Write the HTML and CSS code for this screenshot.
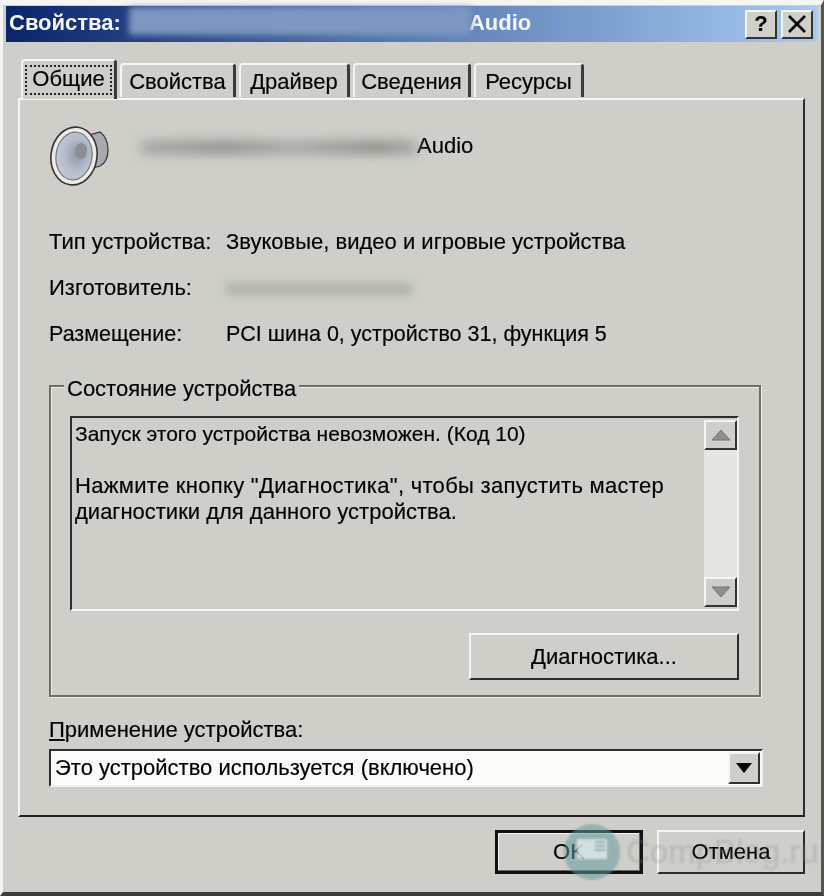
FILE: index.html
```html
<!DOCTYPE html>
<html lang="ru">
<head>
  <meta charset="UTF-8" />
  <meta name="viewport" content="width=device-width, initial-scale=1" />
  <title>Свойства</title>
  <link rel="stylesheet" href="styles.css">
</head>
<body>
  <div class="window">
    <div class="titlebar">
      <span class="title-text">Свойства:</span>
      <span class="title-smudge"></span>
      <span class="title-text title-audio">Audio</span>
      <div class="title-buttons">
        <button class="title-btn">?</button>
        <button class="title-btn">
          <svg width="22" height="20" viewBox="0 0 22 20"><path d="M3 2 L19 18 M19 2 L3 18" stroke="#000" stroke-width="2.6" fill="none"/></svg>
        </button>
      </div>
    </div>

    <div class="tabs">
      <div class="tab tab-active"><span class="tab-focus">Общие</span></div>
      <div class="tab tab-2">Свойства</div>
      <div class="tab tab-3">Драйвер</div>
      <div class="tab tab-4">Сведения</div>
      <div class="tab tab-5">Ресурсы</div>
    </div>

    <div class="panel">
      <div class="device-head">
        <svg class="speaker" width="62" height="64" viewBox="0 0 62 64">
          <defs>
            <radialGradient id="cone" cx="0.6" cy="0.45" r="0.7">
              <stop offset="0" stop-color="#8f97a8"/>
              <stop offset="0.5" stop-color="#b4bccb"/>
              <stop offset="1" stop-color="#c9ced8"/>
            </radialGradient>
          </defs>
          <path d="M36 12 L50 8 Q58 14 58 26 Q58 38 50 42 L36 46 Z" fill="#a8abae" stroke="#333" stroke-width="1.2"/>
          <ellipse cx="24" cy="32" rx="23" ry="29" fill="#ecebe7" stroke="#333" stroke-width="1.6" transform="rotate(8 24 32)"/>
          <ellipse cx="24" cy="32" rx="18" ry="24" fill="url(#cone)" stroke="#777" stroke-width="1.2" transform="rotate(8 24 32)"/>
          <ellipse cx="31" cy="27" rx="6" ry="8" fill="#8d8f95"/>
        </svg>
        <span class="device-blur"></span>
        <span class="device-audio">Audio</span>
      </div>

      <div class="info">
        <div class="info-row"><span class="info-key">Тип устройства:</span><span>Звуковые, видео и игровые устройства</span></div>
        <div class="info-row"><span class="info-key">Изготовитель:</span><span class="maker-blur"></span></div>
        <div class="info-row info-row-pci"><span class="info-key">Размещение:</span><span>PCI шина 0, устройство 31, функция 5</span></div>
      </div>

      <fieldset class="group">
        <legend>Состояние устройства</legend>
        <div class="status-box">
          <div class="status-text">
            <p class="status-line">Запуск этого устройства невозможен. (Код 10)</p>
            <p class="status-hint">Нажмите кнопку "Диагностика", чтобы запустить мастер</p>
            <p>диагностики для данного устройства.</p>
          </div>
          <div class="scrollbar">
            <div class="scroll-btn"><svg width="20" height="12" viewBox="0 0 20 12"><path d="M10 1 L19 11 H1 Z" fill="#8f8e8a" stroke="#77766f"/></svg></div>
            <div class="scroll-track"></div>
            <div class="scroll-btn"><svg width="20" height="12" viewBox="0 0 20 12"><path d="M10 11 L19 1 H1 Z" fill="#8f8e8a" stroke="#77766f"/></svg></div>
          </div>
        </div>
        <div class="group-actions">
          <button class="btn btn-diag"><u>Д</u>иагностика...</button>
        </div>
      </fieldset>

      <div class="usage-label"><u>П</u>рименение устройства:</div>
      <div class="combo">
        <span class="combo-value">Это устройство используется (включено)</span>
        <div class="combo-btn"><svg width="18" height="10" viewBox="0 0 18 10"><path d="M1 0 H17 L9 10 Z" fill="#000"/></svg></div>
      </div>
    </div>

    <div class="footer">
      <button class="btn btn-default">OK</button>
      <button class="btn btn-cancel">Отмена</button>
    </div>

    <!-- watermark sits over the buttons -->
    <div class="watermark">
      <div class="wm-circle">
        <svg width="34" height="34" viewBox="0 0 34 34"><path d="M2 4 H32 V24 H2 Z" fill="#e8eeee" opacity="0.75"/><path d="M20 7 H30 M20 11 H30 M20 15 H30" stroke="#7fa3a6" stroke-width="1.5"/></svg>
      </div>
      <span class="wm-text">CompBlog.ru</span>
    </div>
  </div>
</body>
</html>
```

FILE: styles.css
```css
* {
  margin: 0;
  padding: 0;
  box-sizing: border-box;
}

html,
body {
  width: 824px;
  height: 896px;
  overflow: hidden;
  background: #f4f4f1;
}

body {
  font-family: "Liberation Sans", Arial, sans-serif;
  font-size: 22px;
  color: #000;
  -webkit-text-stroke: 0.2px #111;
}

button {
  font-family: inherit;
  font-size: inherit;
  color: inherit;
}

/* window frame */
.window {
  position: relative;
  width: 824px;
  height: 896px;
  padding: 1px 4px 0 3px;
  background: #cfcec8;
  border-top: 5px solid #f5f5f2;
  border-left: 3px solid #f5f5f2;
  border-right: 3px solid #55554f;
  border-bottom: 4px solid #3d3d39;
  filter: blur(0.45px);
}

/* title bar */
.titlebar {
  display: flex;
  align-items: center;
  height: 36px;
  padding-left: 3px;
  background: linear-gradient(90deg, #0a246a 0%, #4a6ba8 40%, #a6caf0 100%);
}

.title-text {
  color: #f4f6fa;
  font-weight: bold;
  font-size: 22px;
  margin-top: -2px;
  -webkit-text-stroke: 0;
}

.title-smudge {
  width: 342px;
  height: 28px;
  margin-left: 8px;
  margin-top: -6px;
  background: #7f96c0;
  filter: blur(3px);
}

.title-audio {
  margin-left: -2px;
}

.title-buttons {
  display: flex;
  gap: 4px;
  margin-left: auto;
  margin-right: 4px;
}

.title-btn {
  display: flex;
  align-items: center;
  justify-content: center;
  width: 32px;
  height: 29px;
  font-weight: bold;
  font-size: 22px;
  color: #000;
  background: #d0cfca;
  border: 2px solid;
  border-color: #f5f5f2 #333 #333 #f5f5f2;
}

/* tabs */
.tabs {
  display: flex;
  align-items: flex-end;
  height: 56px;
  padding-left: 15px;
  gap: 3px;
  position: relative;
  z-index: 1;
}

.tab {
  height: 34px;
  line-height: 33px;
  text-align: center;
  background: #cfcec8;
  border-top: 2px solid #f5f5f2;
  border-left: 2px solid #f5f5f2;
  border-right: 3px solid #3a3a36;
  border-radius: 4px 4px 0 0;
  margin-bottom: 1px;
}

.tab-active {
  width: 96px;
  height: 40px;
  padding: 4px 2px 3px 2px;
  margin-bottom: -1px;
}

.tab-focus {
  display: block;
  height: 30px;
  line-height: 24px;
  border: 2px dotted #222;
}

.tab-2 { width: 116px; }
.tab-3 { width: 111px; }
.tab-4 { width: 118px; }
.tab-5 { width: 110px; }

/* main panel */
.panel {
  width: 787px;
  height: 719px;
  margin-left: 12px;
  padding: 24px 0 0 29px;
  border: 2px solid;
  border-color: #f5f5f2 #2f2f2b #222 #f5f5f2;
}

.device-head {
  display: flex;
  align-items: flex-start;
  height: 64px;
}

.speaker {
  flex: none;
  margin-left: 1px;
}

.device-blur {
  width: 276px;
  height: 13px;
  margin-left: 29px;
  margin-top: 17px;
  background: linear-gradient(90deg, #a5a4a0, #8f8e8a 30%, #a8a7a3 55%, #8c8b87 85%, #a5a4a0);
  filter: blur(6px);
}

.device-audio {
  margin-top: 9px;
}

.info {
  display: flex;
  flex-direction: column;
  gap: 23px;
  margin-top: 42px;
}

.info-row {
  display: flex;
  height: 23px;
  line-height: 23px;
}

.info-row-pci {
  font-size: 21.5px;
  line-height: 25px;
}

.info-key {
  width: 177px;
}

.maker-blur {
  width: 186px;
  height: 12px;
  margin-top: 7px;
  background: #b1b0ab;
  filter: blur(5px);
}

/* status group */
.group {
  width: 712px;
  height: 326px;
  margin-top: 26px;
  padding: 0 20px 0 19px;
  border: 2px solid #6f6e69;
  box-shadow: 1px 1px 0 #f0f0ec, inset 1px 1px 0 #f0f0ec;
}

.group legend {
  margin-left: -6px;
  padding: 6px 3px 0;
  line-height: 24px;
  background: #cfcec8;
}

.status-box {
  display: flex;
  width: 669px;
  height: 195px;
  margin-top: 15px;
  border: 2px solid;
  border-color: #2e2e2a #f5f5f2 #f5f5f2 #2e2e2a;
}

.status-text {
  flex: 1;
  padding: 3px 0 0 3px;
  line-height: 26px;
}

.status-line {
  margin-bottom: 26px;
  font-size: 21px;
}

.status-hint {
  letter-spacing: 0.3px;
}

.scrollbar {
  display: flex;
  flex-direction: column;
  width: 33px;
  padding: 2px 0;
}

.scroll-btn {
  display: flex;
  align-items: center;
  justify-content: center;
  height: 30px;
  background: #cfcec8;
  border: 2px solid;
  border-color: #f5f5f2 #333 #333 #f5f5f2;
}

.scroll-track {
  flex: 1;
  background: #e6e6e2;
}

.group-actions {
  display: flex;
  justify-content: flex-end;
  margin-top: 22px;
}

.btn {
  background: #cfcec8;
  border: 2px solid;
  border-color: #f5f5f2 #2a2a26 #2a2a26 #f5f5f2;
}

.btn-diag {
  width: 270px;
  height: 47px;
}

/* usage select */
.usage-label {
  height: 24px;
  line-height: 24px;
  margin-top: 21px;
}

.combo {
  display: flex;
  align-items: center;
  width: 714px;
  height: 38px;
  margin-top: 7px;
  padding: 2px 1px 2px 4px;
  background: #fbfbf9;
  border: 2px solid;
  border-color: #2e2e2a #f0f0ec #f0f0ec #2e2e2a;
}

.combo-value {
  flex: 1;
}

.combo-btn {
  display: flex;
  align-items: center;
  justify-content: center;
  width: 32px;
  height: 32px;
  background: #cfcec8;
  border: 2px solid;
  border-color: #f5f5f2 #333 #333 #f5f5f2;
}

/* footer */
.footer {
  display: flex;
  justify-content: flex-end;
  gap: 14px;
  margin-top: 13px;
  padding-right: 12px;
}

.footer .btn {
  width: 148px;
  height: 44px;
}

.btn-default {
  border: 3px solid #111;
  box-shadow: inset -1px -1px 0 #666, inset 1px 1px 0 #f5f5f2;
}

/* watermark */
.watermark {
  position: absolute;
  left: 561px;
  top: 819px;
  display: flex;
  align-items: center;
  pointer-events: none;
}

.wm-circle {
  display: flex;
  align-items: center;
  justify-content: center;
  width: 56px;
  height: 56px;
  border-radius: 50%;
  background: rgba(100, 155, 160, 0.55);
  filter: blur(1px);
}

.wm-text {
  margin-left: 6px;
  font-size: 33px;
  color: rgba(130, 145, 150, 0.3);
  -webkit-text-stroke: 0;
  filter: blur(1px);
}
```
